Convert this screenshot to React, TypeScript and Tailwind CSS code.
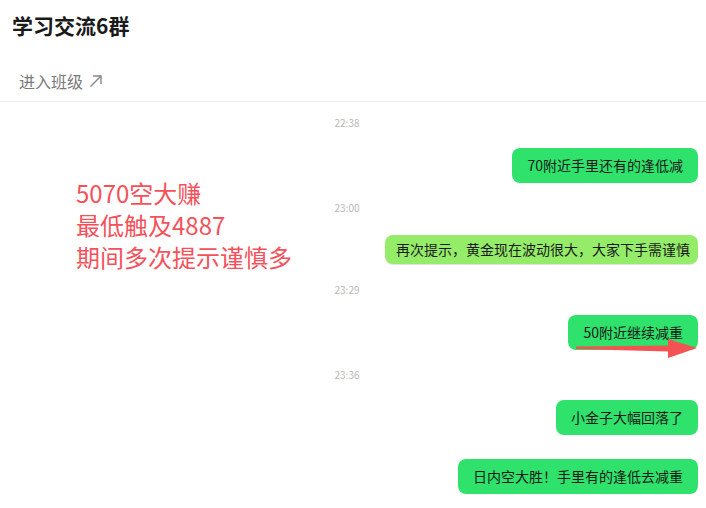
import React from 'react'

const font = { fontFamily: '"Noto Sans CJK SC", "Noto Sans", sans-serif' }

function Time({ t, className = '' }: { t: string; className?: string }) {
  return (
    <div className={`pr-[12px] text-center text-[10px] leading-[14px] text-[#b8b8b8] ${className}`}>{t}</div>
  )
}

function Bubble({ text, className = '', light = false }: { text: string; className?: string; light?: boolean }) {
  return (
    <div className={`flex justify-end pr-[8px] ${className}`}>
      <div
        className={
          light
            ? 'flex h-[29px] items-center rounded-[8px] bg-[#95ec69] pl-[11px] pr-[8px] text-[14px] text-[#1a1a1a] shadow-[0_1px_0_#e4e4e4]'
            : 'flex h-[35px] items-center rounded-[8px] bg-[#2ee26b] px-[15px] text-[14px] text-[#1a1a1a]'
        }
      >
        {text}
      </div>
    </div>
  )
}

export default function App() {
  return (
    <div className="relative h-[508px] w-[706px] overflow-hidden bg-white" style={font}>
      {/* header */}
      <div className="border-b border-[#ececec] pb-[8px] pt-[11px]">
        <h1 className="pl-[12px] text-[21px] font-bold leading-[28px] text-[#1a1a1a]">学习交流6群</h1>
        <div className="mt-[30px] flex items-center gap-[6px] pl-[19px] text-[16px] leading-[24px] text-[#7a7a7a]">
          <span>进入班级</span>
          <svg width="14" height="14" viewBox="0 0 14 14" fill="none" stroke="#888" strokeWidth="1.4">
            <path d="M1.5 12.5 L12 2" />
            <path d="M4 2 H12 V10" />
          </svg>
        </div>
      </div>

      {/* chat */}
      <div className="pt-[14px]">
        <Time t="22:38" />
        <Bubble text="70附近手里还有的逢低减" className="mt-[18px]" />
        <Time t="23:00" className="mt-[18px]" />
        <Bubble text="再次提示，黄金现在波动很大，大家下手需谨慎" light className="mt-[20px]" />
        <Time t="23:29" className="mt-[19px]" />
        <Bubble text="50附近继续减重" className="mt-[18px]" />
        <Time t="23:36" className="mt-[18px]" />
        <Bubble text="小金子大幅回落了" className="mt-[18px]" />
        <Bubble text="日内空大胜！手里有的逢低去减重" className="mt-[24px]" />
      </div>

      {/* annotations */}
      <div className="absolute left-[76px] top-[177px] text-[24px] leading-[32px] text-[#f5515b]">
        <div>5070空大赚</div>
        <div>最低触及4887</div>
        <div>期间多次提示谨慎多</div>
      </div>
      <svg className="absolute left-[570px] top-[334px]" width="132" height="28" viewBox="0 0 132 28">
        <polygon points="6,12.5 98,11.5 98,5 127,14 98,24 98,17.5 6,15" fill="#f45353" />
      </svg>
    </div>
  )
}
